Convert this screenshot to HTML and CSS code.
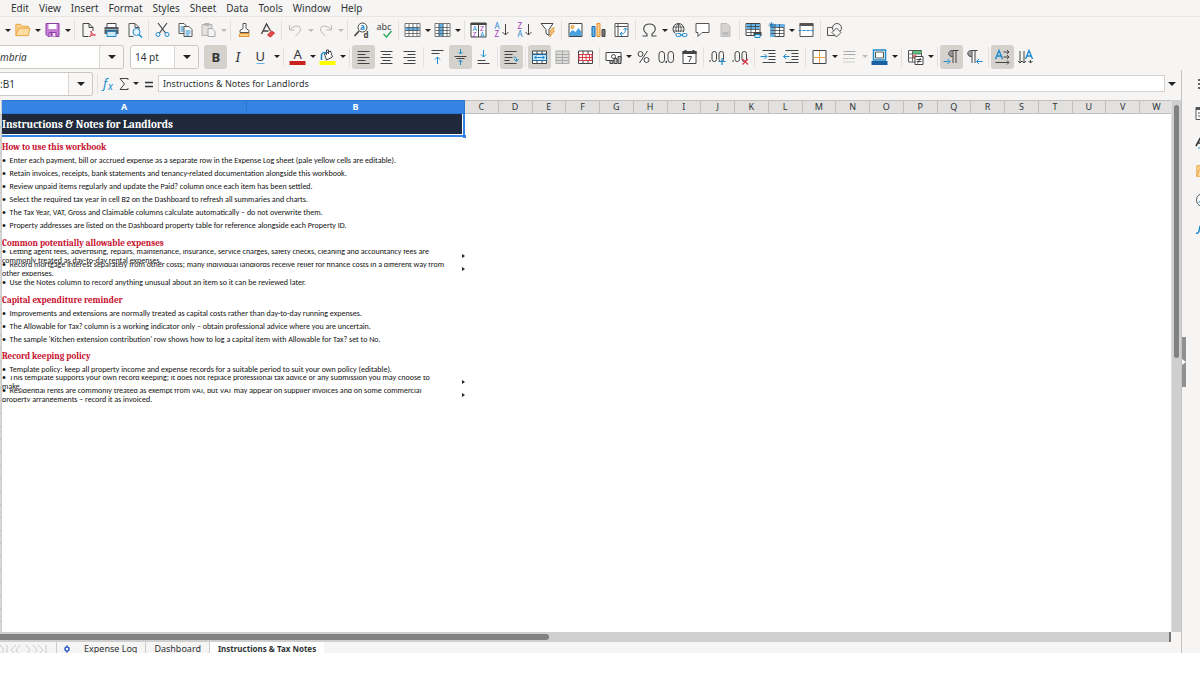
FILE: index.html
```html
<!DOCTYPE html>
<html lang="en">
<head>
<meta charset="utf-8">
<title>Instructions &amp; Tax Notes</title>
<link rel="stylesheet" href="styles.css">
</head>
<body>
<svg class="sprite" aria-hidden="true">
  <symbol id="open" viewBox="0 0 18 16"><path d="M2 14V2h5l2 2h6v3" fill="#fbd28b" stroke="#e8a33d"/><path d="M2 14l3-8h12l-2 8z" fill="#fddc9f" stroke="#e8a33d"/></symbol>
  <symbol id="save" viewBox="0 0 16 16"><path d="M1.500 1.500h13v13h-11l-2-2z" fill="#c77fd6" stroke="#8e3fa5"/><path d="M4 2h8v5H4z" fill="#fff"/><path d="M4.500 14.500v-4h7v4" fill="#f3def7" stroke="#8e3fa5"/><path d="M6 11h2v3H6z" fill="#8e3fa5"/></symbol>
  <symbol id="pdf" viewBox="0 0 16 16"><path d="M8 14.500H2.500v-13h6l4 4V9M8.500 1.500v4h4" fill="none" stroke="#444"/><path d="M9 15c2-2 2-4 1.500-6 1 3 2 4 4.500 4-3-.5-5 .5-6 2" fill="none" stroke="#dc3847"/></symbol>
  <symbol id="print" viewBox="0 0 16 16"><path d="M3.500 1.500h9v4h-9z" fill="#fff" stroke="#444"/><path d="M1 5h14v7H1z" fill="#555b60"/><path d="M2 7h12v1H2z" fill="#8bc"/><path d="M3.500 9.500h9v5h-9z" fill="#cfe8f7" stroke="#1e8bcd"/></symbol>
  <symbol id="preview" viewBox="0 0 16 16"><path d="M7 14.500H2.500v-13h6l4 4V7M8.500 1.500v4h4" fill="none" stroke="#555"/><circle cx="10" cy="10" r="3.500" fill="#e6f4fd" stroke="#1e8bcd"/><path d="M12.500 12.500l3 3" stroke="#1e8bcd" stroke-width="1.500"/></symbol>
  <symbol id="cut" viewBox="0 0 16 16"><path d="M3.500 1L11 11M12.500 1L5 11" stroke="#444" stroke-width="1.200"/><circle cx="3.500" cy="12.500" r="2" fill="none" stroke="#1e8bcd"/><circle cx="12.500" cy="12.500" r="2" fill="none" stroke="#1e8bcd"/></symbol>
  <symbol id="copy" viewBox="0 0 16 16"><path d="M1.500 1.500h5l3 3v7h-8z" fill="#fafafa" stroke="#555"/><path d="M3 5h4M3 7h4M3 9h3" stroke="#1e8bcd"/><path d="M6.500 4.500h5l3 3v7h-8z" fill="#fff" stroke="#555"/><path d="M8 9h5M8 11h5M8 13h4" stroke="#1e8bcd"/></symbol>
  <symbol id="paste" viewBox="0 0 16 16"><path d="M1.500 2.500h10v11h-10z" fill="#e4e2e0" stroke="#b5b3b1"/><path d="M4 1h5v3H4z" fill="#b5b3b1"/><path d="M7.500 6.500h4l3 3v5h-7z" fill="#f4f4f4" stroke="#aaa"/></symbol>
  <symbol id="clone" viewBox="0 0 16 16"><path d="M6.500 1.500h3v5l3 2v2h-9v-2l3-2z" fill="#fff" stroke="#555"/><path d="M3.500 11.500h9v3h-10z" fill="#fbd28b" stroke="#e8902d"/></symbol>
  <symbol id="clear" viewBox="0 0 16 16"><path d="M2 12L7 2l4 7M4 9h5" fill="none" stroke="#444" stroke-width="1.300"/><path d="M8 13l4-4 3 2-4 4z" fill="#e84b4b" stroke="#c62a2a"/></symbol>
  <symbol id="undo" viewBox="0 0 16 16"><path d="M2 3v5h5M2 8c4-5 11-5 11-1 0 3-3 5-5 7" fill="none" stroke="#bbb9b7"/></symbol>
  <symbol id="redo" viewBox="0 0 16 16"><path d="M14 3v5H9M14 8C10 3 3 3 3 7c0 3 3 5 5 7" fill="none" stroke="#bbb9b7"/></symbol>
  <symbol id="find" viewBox="0 0 16 16"><circle cx="9" cy="5.500" r="4.500" fill="#fff" stroke="#444"/><path d="M5.500 9L1 14" stroke="#444" stroke-width="1.600"/><text x="6.500" y="8" class="g b" fill="#1e8bcd">a</text><text x="10" y="16" class="g b" fill="#444">d</text></symbol>
  <symbol id="spell" viewBox="0 0 16 16"><text x="0" y="8" class="g9" fill="#444">abc</text><path d="M7 12l3 3 5-6" fill="none" stroke="#26a95b" stroke-width="1.400"/></symbol>
  <symbol id="rows" viewBox="0 0 16 16"><path d="M.5 1.500h15v13H.5z" fill="#fff"/><path d="M1 5h14v4H1z" fill="#63b4ea"/><path d="M.5 1.500h15v13H.5zM1 5.500h14M1 8.500h14M1 11.500h14M4.500 2v12M8.500 2v12M12.500 2v12" fill="none" stroke="#555" stroke-width=".8"/></symbol>
  <symbol id="cols" viewBox="0 0 16 16"><path d="M.5 1.500h15v13H.5z" fill="#fff"/><path d="M4 2h5v12H4z" fill="#63b4ea"/><path d="M.5 1.500h15v13H.5zM1 5.500h14M1 8.500h14M1 11.500h14M4.500 2v12M8.500 2v12M12.500 2v12" fill="none" stroke="#555" stroke-width=".8"/></symbol>
  <symbol id="sort" viewBox="0 0 16 16"><path d="M.5 1h15v14H.5zM8 1v14" fill="#fff" stroke="#444"/><path d="M0 1h16v2H0z" fill="#444"/><g class="g7"><text x="2" y="9" fill="#1e8bcd">A</text><text x="2" y="15" fill="#a33bb5">Z</text><text x="9.500" y="9" fill="#a33bb5">Z</text><text x="9.500" y="15" fill="#1e8bcd">A</text></g></symbol>
  <symbol id="az" viewBox="0 0 16 16"><text x="1" y="7" class="g" fill="#1e8bcd">A</text><text x="1" y="15" class="g" fill="#a33bb5">Z</text><path d="M12 2v11M9 10l3 3 3-3" fill="none" stroke="#444"/></symbol>
  <symbol id="za" viewBox="0 0 16 16"><text x="1" y="7" class="g" fill="#a33bb5">Z</text><text x="1" y="15" class="g" fill="#1e8bcd">A</text><path d="M12 2v11M9 10l3 3 3-3" fill="none" stroke="#444"/></symbol>
  <symbol id="filter" viewBox="0 0 16 16"><path d="M1.500 1.500h12l-4 6v6l-3-2v-4z" fill="#fff" stroke="#444"/><path d="M13 6l-3 4h2l-2 5 5-6h-2l2-3z" fill="#fbd28b" stroke="#e8902d" stroke-width=".8"/></symbol>
  <symbol id="image" viewBox="0 0 16 16"><path d="M1.500 1.500h13v13h-13z" fill="#fff" stroke="#444"/><path d="M2 14v-3l3-3 3 2 3-4 3 4v4z" fill="#4aa3df"/><circle cx="5" cy="5" r="1.500" fill="#fbd28b" stroke="#e8902d"/></symbol>
  <symbol id="chart" viewBox="0 0 16 16"><path d="M1.500 4.500h3v10h-3z" fill="#63b4ea" stroke="#1468ab"/><path d="M6.500 1.500h3v13h-3z" fill="#fbd28b" stroke="#e8902d"/><path d="M11.500 7.500h3v7h-3z" fill="#777" stroke="#444"/></symbol>
  <symbol id="pivot" viewBox="0 0 16 16"><path d="M1.500 1.500h13v13h-13zM2 4.500h12M4.500 2v12" fill="#fff" stroke="#555"/><path d="M7 12c4 0 5-2 5-6M10 8l2-2 2 2M8.500 10l-2 2 2 2" fill="none" stroke="#1e8bcd"/></symbol>
  <symbol id="omega" viewBox="0 0 16 16"><path d="M1 14h4.500v-2C0 8 2 2 8 2s8 6 2.500 10v2H15" fill="none" stroke="#444" stroke-width="1.100"/></symbol>
  <symbol id="globe" viewBox="0 0 16 16"><circle cx="7" cy="7" r="5.500" fill="none" stroke="#444"/><path d="M2 5h10M2 9h10M7 1.500v11M7 1.500c-4 4-3 8 0 11M7 1.500c4 4 3 8 0 11" fill="none" stroke="#444" stroke-width=".8"/><path d="M4 10h12v6H4z" fill="#f6f5f4"/><rect x="4.500" y="11.500" width="5" height="3" rx="1.500" fill="none" stroke="#1e8bcd"/><rect x="10.500" y="11.500" width="5" height="3" rx="1.500" fill="none" stroke="#1e8bcd"/><path d="M8 13h4" stroke="#1e8bcd"/></symbol>
  <symbol id="comment" viewBox="0 0 16 16"><path d="M1.500 1.500h13v9h-7l-4 4v-4h-2z" fill="#fff" stroke="#555"/></symbol>
  <symbol id="header" viewBox="0 0 16 16"><path d="M3.500 1.500h6l3 3v10h-9z" fill="#d6d4d2" stroke="#bbb"/><path d="M5 10h6v3H5z" fill="#bbb"/></symbol>
  <symbol id="area" viewBox="0 0 16 16"><path d="M.5 1.500h14v12H.5z" fill="#fff" stroke="#444"/><path d="M1 2h13v5H1z" fill="#63b4ea"/><path d="M1 4.500h13M1 7.500h13M1 10.500h13M5.500 2v11M10 2v11" stroke="#444" stroke-width=".8"/><path d="M8 10h8v4H8z" fill="#444"/><path d="M9.500 12.500h5v3h-5z" fill="#cfe8f7" stroke="#1e8bcd"/></symbol>
  <symbol id="freeze" viewBox="0 0 16 16"><path d="M2.500 2.500h13v12h-13z" fill="#fff" stroke="#444"/><path d="M2 2h14v3H2zM2 2h4v13H2z" fill="#63b4ea"/><path d="M2.500 5.500h13M2.500 8.500h13M2.500 11.500h13M6.500 2v12M11 2v12" stroke="#444" stroke-width=".8"/><path d="M3 0v6M0 3h6M1 1l4 4M5 1L1 5" stroke="#1468ab" stroke-width=".7"/></symbol>
  <symbol id="split" viewBox="0 0 16 16"><path d="M1.500 2.500h13v12h-13z" fill="#fff" stroke="#555"/><path d="M1 1h14v3H1z" fill="#555"/><path d="M0 8.500h16" stroke="#1e8bcd" stroke-dasharray="3 1"/></symbol>
  <symbol id="shapes" viewBox="0 0 16 16"><path d="M1 5.500h8v8H1z" fill="#f6f5f4" stroke="#555"/><circle cx="10.500" cy="6" r="4.500" fill="#f6f5f4" stroke="#555"/><path d="M10 6l4.500 4.500L10 15l-4.500-4.500z" fill="#f6f5f4" stroke="#555"/></symbol>
  <symbol id="bold" viewBox="0 0 16 16"><text x="4" y="13" class="g13 b" fill="#333">B</text></symbol>
  <symbol id="italic" viewBox="0 0 16 16"><text x="5" y="13" class="g13 i serif" fill="#333">I</text></symbol>
  <symbol id="underline" viewBox="0 0 16 16"><text x="2" y="12" class="g13" fill="#333">U</text><path d="M3 14.500h8" stroke="#63b4ea"/></symbol>
  <symbol id="fontcolor" viewBox="0 0 16 16"><text x="4" y="10" class="g13" fill="#333">A</text><path d="M0 12h16v4H0z" fill="#c9211e"/></symbol>
  <symbol id="fill" viewBox="0 0 16 16"><path d="M5 5l6-3 2 6-6 3z" fill="#fff" stroke="#444"/><path d="M7 6V1h2v4" fill="none" stroke="#444"/><path d="M2 11V6c0-2 3-3 5-2" fill="none" stroke="#1e8bcd" stroke-width="1.600"/><path d="M0 12h16v4H0z" fill="#ff0"/></symbol>
  <symbol id="left" viewBox="0 0 16 16"><path d="M2 2.500h12M2 5.500h8M2 8.500h12M2 11.500h8M2 14.500h12" stroke="#444"/></symbol>
  <symbol id="center" viewBox="0 0 16 16"><path d="M2 2.500h12M4 5.500h8M2 8.500h12M4 11.500h8M2 14.500h12" stroke="#444"/></symbol>
  <symbol id="right" viewBox="0 0 16 16"><path d="M2 2.500h12M6 5.500h8M2 8.500h12M6 11.500h8M2 14.500h12" stroke="#444"/></symbol>
  <symbol id="vtop" viewBox="0 0 16 16"><path d="M2 1.500h12M2 4.500h8" stroke="#444"/><path d="M8 15V8M5.500 10.500L8 8l2.500 2.500" fill="none" stroke="#1e8bcd"/></symbol>
  <symbol id="vmid" viewBox="0 0 16 16"><path d="M2 7.500h12M4 9.500h8" stroke="#444"/><path d="M8 0v5M6 3l2 2 2-2M8 16v-5M6 13l2-2 2 2" fill="none" stroke="#1e8bcd"/></symbol>
  <symbol id="vbot" viewBox="0 0 16 16"><path d="M2 11.500h8M2 14.500h12" stroke="#444"/><path d="M8 1v7M5.500 5.500L8 8l2.500-2.500" fill="none" stroke="#1e8bcd"/></symbol>
  <symbol id="wrap" viewBox="0 0 16 16"><path d="M1 2.500h12M1 5.500h8M1 8.500h8M1 11.500h5M1 14.500h12" stroke="#444"/><path d="M10 8c3 0 3 1 3 4M10.500 10l2.500 2.500 2-2.500" fill="none" stroke="#1e8bcd"/></symbol>
  <symbol id="merge" viewBox="0 0 16 16"><path d="M1 2h14v12.500H1zM1 5h14M1 11.500h14M5.500 2v3M10.500 2v3M5.500 11.500v3M10.500 11.500v3" fill="#fff" stroke="#444"/><path d="M1 5.500h14v6H1z" fill="#cfe8f7" stroke="#1468ab"/><path d="M3 8.500h10M5 7L3 8.500 5 10M11 7l2 1.500-2 1.500" fill="none" stroke="#1e8bcd"/></symbol>
  <symbol id="mergegrey" viewBox="0 0 16 16"><path d="M1.500 2h13v12.500h-13zM1.500 5.500h13M1.500 8.500h13M1.500 11.500h13M8 2v12" fill="#dedcda" stroke="#aaa"/></symbol>
  <symbol id="unmerge" viewBox="0 0 16 16"><path d="M1 2h14v12.500H1zM5.500 2v3M10.500 2v3M5.500 11v3M10.500 11v3" fill="#fff" stroke="#444"/><path d="M1.500 5.500h13v6h-13zM1.500 8.500h13M5 5v7M8.500 5v7M12 5v7" fill="none" stroke="#dc3847"/></symbol>
  <symbol id="money" viewBox="0 0 16 16"><path d="M.5 3.500h15v8H.5z" fill="#fff" stroke="#444"/><circle cx="8" cy="7.500" r="2" fill="none" stroke="#444"/><path d="M4.500 11.500h3v3h-3zM8.500 9.500h3v5h-3zM12.500 7.500h3v7h-3z" fill="#bbb" stroke="#444"/></symbol>
  <symbol id="percent" viewBox="0 0 16 16"><circle cx="5" cy="5" r="2.500" fill="none" stroke="#444"/><circle cx="11" cy="11" r="2.500" fill="none" stroke="#444"/><path d="M12 2L4 14" stroke="#444"/></symbol>
  <symbol id="number" viewBox="0 0 16 16"><rect x=".5" y="2.500" width="5.500" height="11" rx="2.700" fill="none" stroke="#444"/><rect x="9.500" y="2.500" width="5.500" height="11" rx="2.700" fill="none" stroke="#444"/><path d="M7 12h1.500v2H7z" fill="#444"/></symbol>
  <symbol id="date" viewBox="0 0 16 16"><path d="M1.500 2.500h13v12h-13z" fill="#fff" stroke="#444"/><path d="M1 2h14v3H1zM3 1h2v2H3zM11 1h2v2h-2z" fill="#444"/><path d="M6 7.500h4L7.500 13" fill="none" stroke="#444"/></symbol>
  <symbol id="adddec" viewBox="0 0 16 16"><path d="M0 11h1v2H0z" fill="#444"/><rect x="2.500" y="2.500" width="4.500" height="10" rx="2.200" fill="none" stroke="#444"/><rect x="9.500" y="2.500" width="4.500" height="10" rx="2.200" fill="none" stroke="#444"/><path d="M12.500 9v7M9 12.500h7" stroke="#1e8bcd" stroke-width="1.200"/></symbol>
  <symbol id="deldec" viewBox="0 0 16 16"><path d="M0 11h1v2H0z" fill="#444"/><rect x="2.500" y="2.500" width="4.500" height="10" rx="2.200" fill="none" stroke="#444"/><rect x="9.500" y="2.500" width="4.500" height="10" rx="2.200" fill="none" stroke="#444"/><path d="M10 10l5.500 5.500M15.500 10L10 15.500" stroke="#dc3847" stroke-width="1.200"/></symbol>
  <symbol id="indent" viewBox="0 0 16 16"><path d="M2 1.500h13M8 4.500h7M8 7.500h7M8 10.500h7M2 13.500h13" stroke="#444"/><path d="M0 7.500h6M4 5l2.500 2.500L4 10" fill="none" stroke="#1e8bcd"/></symbol>
  <symbol id="outdent" viewBox="0 0 16 16"><path d="M2 1.500h13M8 4.500h7M8 7.500h7M8 10.500h7M2 13.500h13" stroke="#444"/><path d="M0 7.500h6M2.500 5L0 7.500 2.500 10" fill="none" stroke="#1e8bcd"/></symbol>
  <symbol id="borders" viewBox="0 0 16 16"><path d="M1.500 1.500h13v13h-13z" fill="#fff" stroke="#444"/><path d="M8 2v12M2 8.500h12" stroke="#e8a33d"/></symbol>
  <symbol id="linestyle" viewBox="0 0 16 16"><path d="M2 2.500h12M2 5.500h12" stroke="#aaa"/><path d="M2 9.500h12" stroke="#aaa" stroke-dasharray="2 1"/><path d="M2 13h12" stroke="#aaa" stroke-dasharray="1 1"/></symbol>
  <symbol id="bordercolor" viewBox="0 0 16 16"><path d="M2 1h12v10H2z" fill="#fff" stroke="#1e8bcd" stroke-width="1.500"/><path d="M4 3h8v6H4z" fill="#fff" stroke="#555"/><path d="M0 12h16v4H0z" fill="#1b5fa0"/></symbol>
  <symbol id="cond" viewBox="0 0 16 16"><path d="M1 1.500h13V13H1z" fill="#fff" stroke="#555"/><path d="M5 2h9v3H5z" fill="#5cc47d"/><path d="M5 6h4v3H5z" fill="#ee7070"/><path d="M1 5h13M1 9h13M5 2v11" stroke="#555" stroke-width=".8"/><path d="M7.500 7.500h8v8h-8z" fill="#fff" stroke="#444"/><path d="M9 10.500h5M9 12.500h5M13 9l-3 5.500" stroke="#444"/></symbol>
  <symbol id="ltr" viewBox="0 0 16 16"><path d="M9 2v6C4 8 4 2 9 2z" fill="#999"/><path d="M15 1.500H9c-5 0-5 6 0 6M9.500 1.500V14M12.500 1.500V14" fill="none" stroke="#444"/><path d="M0 12.500h6M4 10l2.500 2.500L4 15" fill="none" stroke="#1e8bcd"/></symbol>
  <symbol id="rtl" viewBox="0 0 16 16"><path d="M5 2v6C0 8 0 2 5 2z" fill="#999"/><path d="M11 1.500H5c-5 0-5 6 0 6M5.500 1.500V14M8.500 1.500V14" fill="none" stroke="#444"/><path d="M10 12.500h6M12.500 10L10 12.500l2.500 2.500" fill="none" stroke="#1e8bcd"/></symbol>
  <symbol id="texth" viewBox="0 0 16 16"><path d="M1 10L4.500 1.500 8 10M2.500 7h4" fill="none" stroke="#1e8bcd" stroke-width="1.400"/><path d="M9 3h5M9 8h5M1 13.500h13M12.500 1l2 2-2 2M12.500 6l2 2-2 2M12.500 11.500l2 2-2 2" fill="none" stroke="#444"/></symbol>
  <symbol id="textv" viewBox="0 0 16 16"><path d="M8 10l3.500-8.500L15 10M9.500 7h4" fill="none" stroke="#1e8bcd" stroke-width="1.400"/><path d="M2.500 2v12M6.500 2v12M13 11v3M.5 12l2 2 2-2M4.500 12l2 2 2-2M11 12l2 2 2-2" fill="none" stroke="#444"/></symbol>
  <symbol id="fx" viewBox="0 0 16 16"><text x="3" y="12" class="g13 i" fill="#1e8bcd">f</text><text x="8" y="14" class="g10 i" fill="#1e8bcd">x</text></symbol>
  <symbol id="sum" viewBox="0 0 16 16"><path d="M12 4V2.500H4L8.500 8 4 13.500h8V12" fill="none" stroke="#444"/></symbol>
  <symbol id="equal" viewBox="0 0 16 16"><path d="M4 6.500h8M4 10.500h8" stroke="#333" stroke-width="1.500"/></symbol>
  <symbol id="props" viewBox="0 0 16 16"><path d="M1 2.500h15v12H1z" fill="#fff" stroke="#555"/><path d="M1 2h15v3H1z" fill="#555"/><path d="M3 8h8M3 11h8" stroke="#555"/></symbol>
  <symbol id="styles" viewBox="0 0 16 16"><path d="M1 12L7 1l6 11M3 9h8" fill="none" stroke="#333" stroke-width="1.600"/><path d="M3 14h8" stroke="#1e8bcd"/></symbol>
  <symbol id="nav" viewBox="0 0 16 16"><circle cx="8" cy="8" r="6.500" fill="#fff" stroke="#555"/><path d="M3 11l3-4 5-3-2 6z" fill="#63b4ea"/></symbol>
  <symbol id="func" viewBox="0 0 16 16"><path d="M1 12c3 1 3-2 4-7" fill="none" stroke="#1e8bcd" stroke-width="1.500"/></symbol>
</svg>

<main class="app">
  <nav class="menubar">
    <button>Edit</button><button>View</button><button>Insert</button><button>Format</button><button>Styles</button><button>Sheet</button><button>Data</button><button>Tools</button><button>Window</button><button>Help</button>
  </nav>

  <div class="toolbar standard">
    <button class="drop" aria-label="New options"></button>
    <button class="tool" aria-label="Open"><svg><use href="#open"/></svg></button><button class="drop" aria-label="Open options"></button>
    <button class="tool" aria-label="Save"><svg><use href="#save"/></svg></button><button class="drop" aria-label="Save options"></button>
    <i class="sep"></i>
    <button class="tool" aria-label="Export PDF"><svg><use href="#pdf"/></svg></button>
    <button class="tool" aria-label="Print"><svg><use href="#print"/></svg></button>
    <button class="tool" aria-label="Preview"><svg><use href="#preview"/></svg></button>
    <i class="sep"></i>
    <button class="tool" aria-label="Cut"><svg><use href="#cut"/></svg></button>
    <button class="tool" aria-label="Copy"><svg><use href="#copy"/></svg></button>
    <button class="tool" aria-label="Paste"><svg><use href="#paste"/></svg></button><button class="drop off" aria-label="Paste options"></button>
    <i class="sep"></i>
    <button class="tool" aria-label="Clone formatting"><svg><use href="#clone"/></svg></button>
    <button class="tool" aria-label="Clear formatting"><svg><use href="#clear"/></svg></button>
    <i class="sep"></i>
    <button class="tool" aria-label="Undo"><svg><use href="#undo"/></svg></button><button class="drop off" aria-label="Undo list"></button>
    <button class="tool" aria-label="Redo"><svg><use href="#redo"/></svg></button><button class="drop off" aria-label="Redo list"></button>
    <i class="sep"></i>
    <button class="tool" aria-label="Find"><svg><use href="#find"/></svg></button>
    <button class="tool" aria-label="Spelling"><svg><use href="#spell"/></svg></button>
    <i class="sep"></i>
    <button class="tool" aria-label="Row"><svg><use href="#rows"/></svg></button><button class="drop" aria-label="Row options"></button>
    <button class="tool" aria-label="Column"><svg><use href="#cols"/></svg></button><button class="drop" aria-label="Column options"></button>
    <i class="sep"></i>
    <button class="tool" aria-label="Sort"><svg><use href="#sort"/></svg></button>
    <button class="tool" aria-label="Sort ascending"><svg><use href="#az"/></svg></button>
    <button class="tool" aria-label="Sort descending"><svg><use href="#za"/></svg></button>
    <button class="tool" aria-label="AutoFilter"><svg><use href="#filter"/></svg></button>
    <i class="sep"></i>
    <button class="tool" aria-label="Image"><svg><use href="#image"/></svg></button>
    <button class="tool" aria-label="Chart"><svg><use href="#chart"/></svg></button>
    <button class="tool" aria-label="Pivot table"><svg><use href="#pivot"/></svg></button>
    <i class="sep"></i>
    <button class="tool" aria-label="Special character"><svg><use href="#omega"/></svg></button><button class="drop" aria-label="Character options"></button>
    <button class="tool" aria-label="Hyperlink"><svg><use href="#globe"/></svg></button>
    <button class="tool" aria-label="Comment"><svg><use href="#comment"/></svg></button>
    <button class="tool" aria-label="Headers and footers"><svg><use href="#header"/></svg></button>
    <i class="sep"></i>
    <button class="tool" aria-label="Print area"><svg><use href="#area"/></svg></button>
    <button class="tool" aria-label="Freeze"><svg><use href="#freeze"/></svg></button><button class="drop" aria-label="Freeze options"></button>
    <button class="tool" aria-label="Split window"><svg><use href="#split"/></svg></button>
    <i class="sep"></i>
    <button class="tool" aria-label="Draw functions"><svg><use href="#shapes"/></svg></button>
  </div>

  <div class="toolbar format">
    <div class="combo font"><input aria-label="Font name" value="mbria"><button aria-label="Font list"></button></div>
    <div class="combo size"><input aria-label="Font size" value="14 pt"><button aria-label="Size list"></button></div>
    <button class="tool on" aria-label="Bold"><svg><use href="#bold"/></svg></button>
    <button class="tool" aria-label="Italic"><svg><use href="#italic"/></svg></button>
    <button class="tool" aria-label="Underline"><svg><use href="#underline"/></svg></button><button class="drop" aria-label="Underline options"></button>
    <i class="sep"></i>
    <button class="tool" aria-label="Font colour"><svg><use href="#fontcolor"/></svg></button><button class="drop" aria-label="Font colours"></button>
    <button class="tool" aria-label="Background colour"><svg><use href="#fill"/></svg></button><button class="drop" aria-label="Background colours"></button>
    <i class="sep"></i>
    <button class="tool on" aria-label="Align left"><svg><use href="#left"/></svg></button>
    <button class="tool" aria-label="Align centre"><svg><use href="#center"/></svg></button>
    <button class="tool" aria-label="Align right"><svg><use href="#right"/></svg></button>
    <i class="sep"></i>
    <button class="tool" aria-label="Align top"><svg><use href="#vtop"/></svg></button>
    <button class="tool on" aria-label="Centre vertically"><svg><use href="#vmid"/></svg></button>
    <button class="tool" aria-label="Align bottom"><svg><use href="#vbot"/></svg></button>
    <i class="sep"></i>
    <button class="tool on" aria-label="Wrap text"><svg><use href="#wrap"/></svg></button>
    <i class="sep"></i>
    <button class="tool on" aria-label="Merge and centre"><svg><use href="#merge"/></svg></button>
    <button class="tool" aria-label="Merge cells"><svg><use href="#mergegrey"/></svg></button>
    <button class="tool" aria-label="Unmerge cells"><svg><use href="#unmerge"/></svg></button>
    <i class="sep"></i>
    <button class="tool" aria-label="Currency"><svg><use href="#money"/></svg></button><button class="drop" aria-label="Currency options"></button>
    <button class="tool" aria-label="Percent"><svg><use href="#percent"/></svg></button>
    <button class="tool" aria-label="Number"><svg><use href="#number"/></svg></button>
    <button class="tool" aria-label="Date"><svg><use href="#date"/></svg></button>
    <i class="sep"></i>
    <button class="tool" aria-label="Add decimal place"><svg><use href="#adddec"/></svg></button>
    <button class="tool" aria-label="Delete decimal place"><svg><use href="#deldec"/></svg></button>
    <i class="sep"></i>
    <button class="tool" aria-label="Increase indent"><svg><use href="#indent"/></svg></button>
    <button class="tool" aria-label="Decrease indent"><svg><use href="#outdent"/></svg></button>
    <i class="sep"></i>
    <button class="tool" aria-label="Borders"><svg><use href="#borders"/></svg></button><button class="drop" aria-label="Border options"></button>
    <button class="tool" aria-label="Border style"><svg><use href="#linestyle"/></svg></button><button class="drop off" aria-label="Border styles"></button>
    <button class="tool" aria-label="Border colour"><svg><use href="#bordercolor"/></svg></button><button class="drop" aria-label="Border colours"></button>
    <i class="sep"></i>
    <button class="tool" aria-label="Conditional formatting"><svg><use href="#cond"/></svg></button><button class="drop" aria-label="Conditional options"></button>
    <i class="sep"></i>
    <button class="tool on" aria-label="Left to right"><svg><use href="#ltr"/></svg></button>
    <button class="tool" aria-label="Right to left"><svg><use href="#rtl"/></svg></button>
    <i class="sep"></i>
    <button class="tool on" aria-label="Horizontal text"><svg><use href="#texth"/></svg></button>
    <button class="tool" aria-label="Vertical text"><svg><use href="#textv"/></svg></button>
  </div>

  <div class="workspace">
    <div class="document">
      <div class="formula">
        <div class="combo name"><input aria-label="Name box" value=":B1"><button aria-label="Names"></button></div>
        <i class="sep"></i>
        <button class="small" aria-label="Function wizard"><svg><use href="#fx"/></svg></button>
        <button class="small" aria-label="Sum"><svg><use href="#sum"/></svg></button>
        <button class="drop" aria-label="Sum options"></button>
        <button class="small eq" aria-label="Formula"><svg><use href="#equal"/></svg></button>
        <input class="line" aria-label="Input line" value="Instructions &amp; Notes for Landlords">
        <button class="drop big" aria-label="Expand formula bar"></button>
      </div>

      <div class="view">
        <div class="rowheads"></div>
        <div class="cells">
          <table>
            <colgroup><col class="ca"><col class="cb"><col span="21"></colgroup>
            <thead><tr><th class="sel">A</th><th class="sel">B</th><th>C</th><th>D</th><th>E</th><th>F</th><th>G</th><th>H</th><th>I</th><th>J</th><th>K</th><th>L</th><th>M</th><th>N</th><th>O</th><th>P</th><th>Q</th><th>R</th><th>S</th><th>T</th><th>U</th><th>V</th><th>W</th></tr></thead>
            <tbody>
              <tr class="title"><td colspan="2"><div>Instructions &amp; Notes for Landlords</div></td></tr>
              <tr class="gap"><td></td></tr>
              <tr class="head"><td colspan="2">How to use this workbook</td></tr>
              <tr><td colspan="2"><div>•&nbsp; Enter each payment, bill or accrued expense as a separate row in the Expense Log sheet (pale yellow cells are editable).</div></td></tr>
              <tr><td colspan="2"><div>•&nbsp; Retain invoices, receipts, bank statements and tenancy-related documentation alongside this workbook.</div></td></tr>
              <tr><td colspan="2"><div>•&nbsp; Review unpaid items regularly and update the Paid? column once each item has been settled.</div></td></tr>
              <tr><td colspan="2"><div>•&nbsp; Select the required tax year in cell B2 on the Dashboard to refresh all summaries and charts.</div></td></tr>
              <tr><td colspan="2"><div>•&nbsp; The Tax Year, VAT, Gross and Claimable columns calculate automatically – do not overwrite them.</div></td></tr>
              <tr><td colspan="2"><div>•&nbsp; Property addresses are listed on the Dashboard property table for reference alongside each Property ID.</div></td></tr>
              <tr class="gap"><td></td></tr>
              <tr class="head"><td colspan="2">Common potentially allowable expenses</td></tr>
              <tr class="over"><td colspan="2"><div>•&nbsp; Letting agent fees, advertising, repairs, maintenance, insurance, service charges, safety checks, cleaning and accountancy fees are<br>commonly treated as day-to-day rental expenses.</div></td></tr>
              <tr class="over"><td colspan="2"><div>•&nbsp; Record mortgage interest separately from other costs; many individual landlords receive relief for finance costs in a different way from<br>other expenses.</div></td></tr>
              <tr><td colspan="2"><div>•&nbsp; Use the Notes column to record anything unusual about an item so it can be reviewed later.</div></td></tr>
              <tr class="gap"><td></td></tr>
              <tr class="head"><td colspan="2">Capital expenditure reminder</td></tr>
              <tr><td colspan="2"><div>•&nbsp; Improvements and extensions are normally treated as capital costs rather than day-to-day running expenses.</div></td></tr>
              <tr><td colspan="2"><div>•&nbsp; The Allowable for Tax? column is a working indicator only – obtain professional advice where you are uncertain.</div></td></tr>
              <tr><td colspan="2"><div>•&nbsp; The sample 'Kitchen extension contribution' row shows how to log a capital item with Allowable for Tax? set to No.</div></td></tr>
              <tr class="gap small-gap"><td></td></tr>
              <tr class="head"><td colspan="2">Record keeping policy</td></tr>
              <tr><td colspan="2"><div>•&nbsp; Template policy: keep all property income and expense records for a suitable period to suit your own policy (editable).</div></td></tr>
              <tr class="over"><td colspan="2"><div>•&nbsp; This template supports your own record keeping; it does not replace professional tax advice or any submission you may choose to<br>make.</div></td></tr>
              <tr class="over"><td colspan="2"><div>•&nbsp; Residential rents are commonly treated as exempt from VAT, but VAT may appear on supplier invoices and on some commercial<br>property arrangements – record it as invoiced.</div></td></tr>
            </tbody>
          </table>
        </div>
        <div class="vscroll"><div class="thumb"></div></div>
      </div>

      <div class="hscroll"><div class="track"><div class="thumb"></div></div></div>

      <div class="tabs">
        <div class="tabnav"><svg viewBox="0 0 48 16"><path d="M0 3l4 5-4 5M7 3v10M16 3l-5 5 5 5M20 3l-4 5 4 5M26 3l4 5-4 5M33 3l4 5-4 5M38 3l5 5-5 5M46 3v10" fill="none" stroke="#ccc"/></svg></div>
        <button class="add" aria-label="Add sheet"><svg viewBox="0 0 8 8"><circle cx="4" cy="4" r="2" fill="#fff" stroke="#2a5fc0" stroke-width="1.500"/><path d="M4 0v2M4 6v2" stroke="#2a5fc0"/></svg></button>
        <button class="tab">Expense Log</button><button class="tab">Dashboard</button><button class="tab current">Instructions &amp; Tax Notes</button>
      </div>
    </div>

    <aside class="sidebar">
      <div class="handle"></div>
      <div class="deck">
        <button aria-label="Sidebar settings"><svg viewBox="0 0 16 16"><path d="M3 4h11M3 8h11M3 12h11" stroke="#333" stroke-width="1.500"/></svg></button>
        <button aria-label="Properties"><svg><use href="#props"/></svg></button>
        <button aria-label="Styles"><svg><use href="#styles"/></svg></button>
        <button aria-label="Gallery"><svg><use href="#open"/></svg></button>
        <button aria-label="Navigator"><svg><use href="#nav"/></svg></button>
        <button aria-label="Functions"><svg><use href="#func"/></svg></button>
      </div>
    </aside>
  </div>
</main>
</body>
</html>
```
FILE: styles.css
```css
* { box-sizing: border-box; }

body {
  margin: 0;
  min-height: 100vh;
  padding-bottom: 22px;
  display: flex;
  flex-direction: column;
  background: #fff;
  color: #2e3436;
  font: 9px "Noto Sans", "Open Sans", sans-serif;
  overflow: hidden;
}

button, input { font: inherit; color: inherit; border: 0; padding: 0; margin: 0; background: none; }
button { display: block; }
svg { display: block; }
.sprite { display: none; }

.g { font-size: 8px; }
.b { font-weight: 700; }
.i { font-style: italic; }
.serif { font-family: "DejaVu Serif", serif; }
.g7 { font-size: 7px; }
.g9 { font-size: 9px; }
.g10 { font-size: 10px; }
.g13 { font-size: 13px; }

.app { flex: 1; display: flex; flex-direction: column; background: #f6f5f4; }

.menubar {
  display: flex;
  gap: 10px;
  height: 17px;
  padding-left: 11px;
  border-bottom: 1px solid #e8e6e4;
  align-items: center;
  font-size: 10px;
}

.toolbar { display: flex; align-items: center; height: 27px; }
.toolbar.standard { height: 26px; padding-left: 4px; }
.tool { flex: none; width: 23px; height: 24px; padding: 4px 3px; border-radius: 3px; }
.tool svg { width: 17px; height: 16px; }
.on { background: #d5d1cd; }

.drop { flex: none; width: 7px; height: 22px; display: flex; align-items: center; justify-content: center; }
.drop::after, .combo button::after { content: ""; border: solid transparent; border-width: 3px 3px 0; border-top-color: #222; }
.drop.off::after { border-top-color: #bbb; }
.drop.big { width: 12px; }
.drop.big::after, .combo button::after { border-width: 4px 4px 0; }

.sep { flex: none; width: 1px; height: 20px; margin: 0 2px; background: #e3e1df; }
.drop + .sep { margin-left: 3px; }

.combo {
  display: flex;
  flex: none;
  height: 24px;
  border: 1px solid #cdc7c2;
  border-radius: 3px;
  background: #fff;
  font-size: 10px;
}
.combo input { flex: 1; min-width: 0; }
.combo button { flex: none; width: 24px; border-left: 1px solid #dad6d2; background: #f8f7f6; border-radius: 0 3px 3px 0; display: flex; align-items: center; justify-content: center; }
.font { width: 124px; border-left: 0; border-radius: 0 3px 3px 0; margin-right: 6px; }
.font input { font-style: italic; }
.size { width: 69px; margin-right: 5px; }
.size input { padding-left: 4px; }

.workspace { flex: 1; display: flex; min-height: 0; }
.document { flex: 1; min-width: 0; display: flex; flex-direction: column; }

.formula { display: flex; align-items: center; height: 29px; padding-bottom: 2px; }
.name { width: 93px; border-left: 0; border-radius: 0 3px 3px 0; margin-right: 2px; }
.small { flex: none; width: 16px; height: 16px; }
.small svg { width: 16px; height: 16px; }
.eq { margin: 0 1px 0 2px; }
.line { flex: 1; min-width: 0; height: 17px; border: 1px solid #d5d2cf; background: #fff; padding: 0 4px; }
.formula .drop.big { margin: 0 3px 0 1px; }

.view { flex: 1; display: flex; min-height: 0; margin-top: 1px; }
.rowheads { flex: none; width: 1px; margin-top: 14px; background: repeating-linear-gradient(#bbb 0 1px, #d8d8d8 1px 13px); }
.cells { flex: 1; min-width: 0; overflow: hidden; background: #fff; border-left: 1px solid #ccc; }

table { width: calc(100% + 3px); table-layout: fixed; border-collapse: separate; border-spacing: 0; }
.ca { width: 245px; }
.cb { width: 218px; }
th { height: 14px; padding: 0; border: solid #c0c0c0; border-width: 1px 1px 1px 0; background: #e2e1e0; font-weight: 400; line-height: 12px; }
th.sel { background: #3584e4; border-color: #2a76d2; color: #fff; font-weight: 700; }
td { height: 13px; padding: 0; font: 8px/12px "Carlito", "Lato", sans-serif; color: #111; white-space: nowrap; }
td div { height: 13px; overflow: hidden; }

.head td { font: 700 9px/13px "Caladea", "Liberation Serif", serif; color: #c8102e; }
.gap td { height: 5px; font-size: 0; line-height: 0; }
.title td { position: relative; height: 23px; border: solid #3584e4; border-width: 0 2px 2px 0; }
.title td div { height: 21px; background: #1e2a3c; border: solid #fff; border-width: 0 1px 1px 0; color: #fff; font: 700 11px/22px "Caladea", "Liberation Serif", serif; }
.title td::after { content: ""; position: absolute; right: -3px; bottom: -3px; width: 3px; height: 3px; background: #3584e4; }
.title + .gap td, .small-gap td { height: 4px; }

.over td { position: relative; }
.over td div { display: flex; align-items: center; padding-bottom: 1px; line-height: 9px; }
.over td::after { content: ""; position: absolute; right: 0; bottom: 5px; border: solid transparent; border-width: 2px 0 2px 3px; border-left-color: #222; }

.vscroll { flex: none; width: 10px; padding: 5px 2px 0; background: #cfcfcf; border-left: 1px solid #ddd; }
.vscroll .thumb { height: 48%; border-radius: 3px; background: #7f8281; }
.hscroll { flex: none; height: 10px; padding-right: 10px; }
.track { height: 10px; padding: 2px 0; background: #cfcfcf; border-right: 2px solid #777; }
.hscroll .thumb { width: 47%; height: 6px; border-radius: 0 3px 3px 0; background: #7f8281; }

.tabs { flex: none; display: flex; height: 11px; overflow: hidden; line-height: 14px; }
.tabnav { flex: none; width: 56px; }
.tabnav svg { width: 48px; height: 16px; }
.add { flex: none; width: 20px; height: 14px; padding: 3px 6px; border-left: 1px solid #ccc; }
.add svg { width: 8px; height: 8px; }
.tab { flex: none; padding: 0 8px; height: 14px; border-right: 1px solid #ccc; }
.current { background: #fff; font-size: 8px; font-weight: 700; border: 0; }

.sidebar { flex: none; display: flex; width: 19px; border-left: 1px solid #c4c2c0; overflow: hidden; }
.handle { flex: none; align-self: center; width: 4px; height: 50px; background: #8e9190; display: flex; align-items: center; }
.handle::after { content: ""; border: solid transparent; border-width: 3px 0 3px 4px; border-left-color: #fff; }
.deck { flex: none; padding: 6px 0 0 9px; display: flex; flex-direction: column; gap: 13px; }
.deck button { width: 16px; height: 16px; }
.deck svg { width: 16px; height: 16px; }
```
